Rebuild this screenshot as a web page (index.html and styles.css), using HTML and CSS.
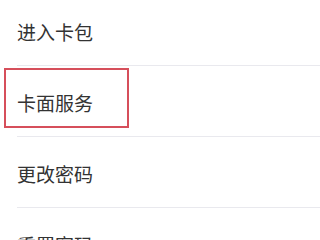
FILE: index.html
```html
<!DOCTYPE html>
<html lang="zh-CN">
<head>
<meta charset="utf-8">
<title>卡片设置</title>
<link rel="stylesheet" href="styles.css">
</head>
<body>
<ul class="menu">
  <li class="item"><span class="label">进入卡包</span></li>
  <li class="item item-highlighted"><span class="label">卡面服务</span><span class="highlight"></span></li>
  <li class="item"><span class="label">更改密码</span></li>
  <li class="item"><span class="label">重置密码</span></li>
</ul>
</body>
</html>
```

FILE: styles.css
```css
html, body {
  margin: 0;
  padding: 0;
  background: #ffffff;
  width: 320px;
  height: 240px;
  overflow: hidden;
}

.menu {
  list-style: none;
  margin: -5px 0 0 0;
  padding: 0 0 0 17px;
  display: flex;
  flex-direction: column;
  font-family: "Noto Sans CJK SC", "Noto Sans", sans-serif;
}

.item {
  position: relative;
  height: 70px;
  display: flex;
  align-items: center;
  border-bottom: 1px solid #e9e9ee;
}

.label {
  font-size: 19px;
  line-height: 1;
  color: #333333;
  padding-top: 3px;
}

.highlight {
  position: absolute;
  left: -13px;
  top: 2px;
  width: 125px;
  height: 60px;
  box-sizing: border-box;
  border: 2px solid #d64f5b;
}
```
